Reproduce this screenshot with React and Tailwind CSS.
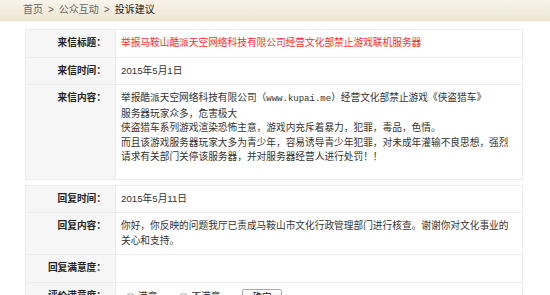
import React from "react";

function Row({ label, children, last }) {
  return (
    <div className={`grid grid-cols-[90px_1fr] ${last ? "" : "border-b border-[#ececec]"}`}>
      <div className="bg-[#f6f6f6] text-right pr-[9px] font-bold text-[#222] py-[6px] border-r border-[#ececec]">
        {label}
      </div>
      <div className="bg-white pl-[5px] pr-2 py-[6px]">{children}</div>
    </div>
  );
}

export default function App() {
  return (
    <div
      className="w-[550px] h-[295px] overflow-hidden bg-white text-[#333] text-[9.7px] leading-[14.5px]"
      style={{ fontFamily: '"Liberation Sans", "Noto Sans CJK SC", sans-serif' }}
    >
      <div className="h-[21px] bg-gradient-to-b from-[#f8f4eb] to-[#efe6d3] border-b border-[#ebe0c9] flex items-center pl-[23px] text-[10px] text-[#666]">
        <span>首页</span>
        <span className="mx-[5px]">&gt;</span>
        <span>公众互动</span>
        <span className="mx-[5px]">&gt;</span>
        <span className="text-[#222]">投诉建议</span>
      </div>

      <div className="ml-[25px] w-[498px] mt-[8px] border border-[#ececec]">
        <Row label="来信标题：">
          <span className="text-[#ff2b2b]">举报马鞍山酷派天空网络科技有限公司经营文化部禁止游戏联机服务器</span>
        </Row>
        <Row label="来信时间：">2015年5月1日</Row>
        <Row label="来信内容：" last>
          <div className="pb-[8px]">
            举报酷派天空网络科技有限公司（<span style={{ fontFamily: '"Liberation Mono", monospace' }} className="text-[9px]">www.kupai.me</span>）经营文化部禁止游戏《侠盗猎车》
            <br />
            服务器玩家众多，危害极大
            <br />
            侠盗猎车系列游戏渲染恐怖主意，游戏内充斥着暴力，犯罪，毒品，色情。
            <br />
            而且该游戏服务器玩家大多为青少年，容易诱导青少年犯罪，对未成年灌输不良思想，强烈请求有关部门关停该服务器，并对服务器经营人进行处罚！！
          </div>
        </Row>
      </div>

      <div className="ml-[25px] w-[498px] mt-[5px] border border-[#ececec]">
        <Row label="回复时间：">2015年5月11日</Row>
        <Row label="回复内容：">
          <div>你好，你反映的问题我厅已责成马鞍山市文化行政管理部门进行核查。谢谢你对文化事业的关心和支持。</div>
        </Row>
        <Row label="回复满意度：">&nbsp;</Row>
        <Row label="评价满意度：" last>
          <div className="flex items-center">
            <span className="w-[9px] h-[9px] rounded-full border border-[#aaa] bg-white ml-[5px] mr-[3px]"></span>
            <span>满意</span>
            <span className="w-[9px] h-[9px] rounded-full border border-[#aaa] bg-white ml-[22px] mr-[3px]"></span>
            <span>不满意</span>
            <button className="ml-[22px] h-[17px] px-[9px] border border-[#aaa] rounded-[2px] bg-gradient-to-b from-white to-[#e6e6e6] text-[9.7px] leading-[15px] text-[#222]">确定</button>
          </div>
        </Row>
      </div>
    </div>
  );
}
